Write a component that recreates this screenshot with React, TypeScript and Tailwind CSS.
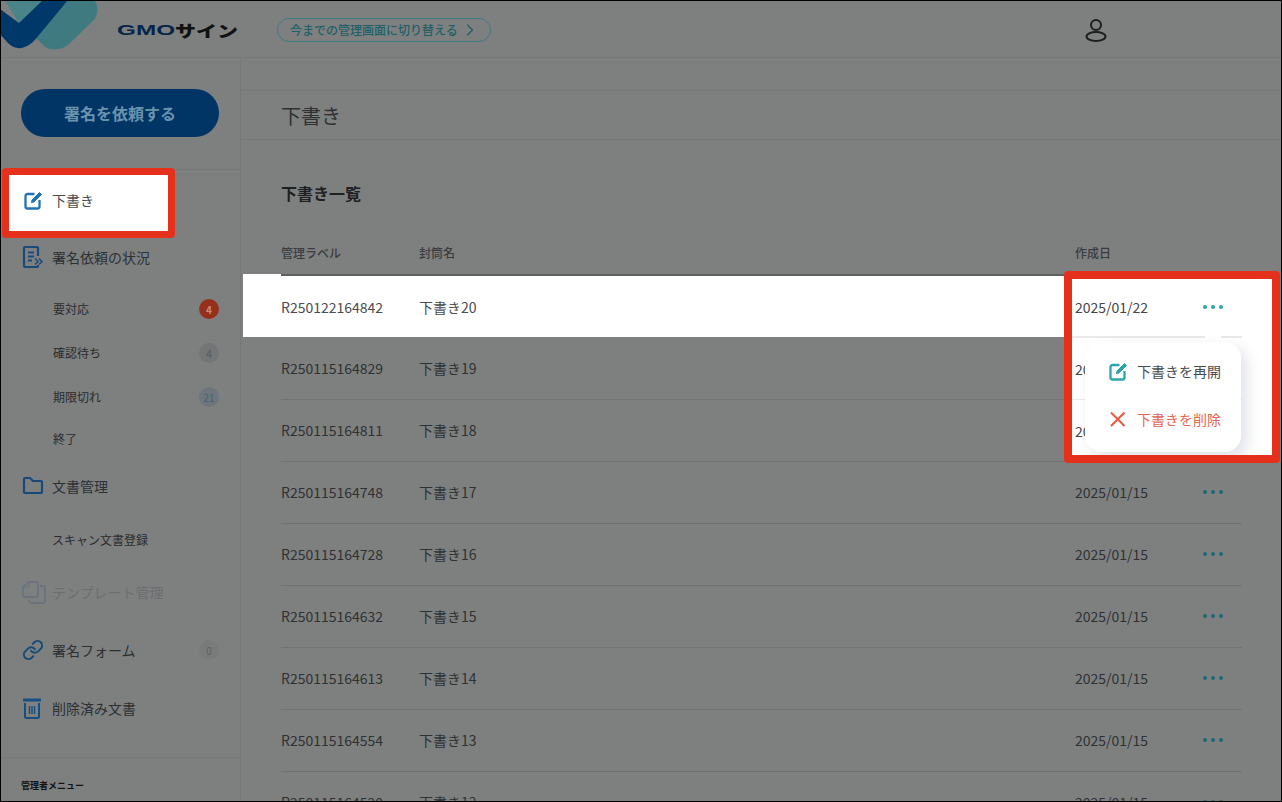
import { ChevronRight, Link } from 'lucide-react';
import type { ReactNode } from 'react';

const FONT = 'font-["Noto_Sans_CJK_JP","Noto_Sans",sans-serif]';

const DRAFTS = [
  ['R250122164842', '下書き20', '2025/01/22'],
  ['R250115164829', '下書き19', '2025/01/15'],
  ['R250115164811', '下書き18', '2025/01/15'],
  ['R250115164748', '下書き17', '2025/01/15'],
  ['R250115164728', '下書き16', '2025/01/15'],
  ['R250115164632', '下書き15', '2025/01/15'],
  ['R250115164613', '下書き14', '2025/01/15'],
  ['R250115164554', '下書き13', '2025/01/15'],
  ['R250115164520', '下書き12', '2025/01/15'],
];

function Dots({ color }: { color: string }) {
  return (
    <div className="flex w-5 justify-between">
      <span className={`size-1 rounded-full ${color}`} />
      <span className={`size-1 rounded-full ${color}`} />
      <span className={`size-1 rounded-full ${color}`} />
    </div>
  );
}

function Logo() {
  return (
    <svg width="100" height="50" viewBox="0 0 100 50" className="shrink-0">
      <path d="M4 0 H44 L18 22 Z" fill="#4a8388" />
      <path d="M60 0 H94 Q99 8 94 18 L67 44 Q55 52 44 46 L34 36 Z" fill="#3f7a80" />
      <path d="M-1 8 L18 22 L42 -1 H67 L33 40 Q18 54 6 41 L-1 33 Z" fill="#00386a" />
    </svg>
  );
}

function PenIcon({ color }: { color: string }) {
  return (
    <svg width="19" height="19" viewBox="0 0 19 19" fill="none" stroke={color} strokeWidth="2.3" className="shrink-0">
      <path d="M10.5 3 H3.5 a2 2 0 0 0 -2 2 V15.5 a2 2 0 0 0 2 2 H13.5 a2 2 0 0 0 2 -2 V9" />
      <path d="M7.5 11.5 L8 9 L15.5 1.5 L17.5 3.5 L10 11 Z" fill={color} stroke={color} strokeWidth="1" />
    </svg>
  );
}

function CrossIcon() {
  return (
    <svg width="19" height="19" viewBox="0 0 19 19" fill="none" stroke="#e4583f" strokeWidth="2" className="shrink-0">
      <path d="M2 2.5 L15.5 16 M15.5 2.5 L2 16" />
    </svg>
  );
}

function DocIcon() {
  return (
    <svg width="22" height="24" viewBox="0 0 22 24" fill="none" stroke="#1b4b78" strokeWidth="2.2">
      <path d="M16 20 V21 a1 1 0 0 1 -1 1 H3 a1 1 0 0 1 -1 -1 V3 a1 1 0 0 1 1 -1 H15 a1 1 0 0 1 1 1 V11" />
      <path d="M6 7.5 H12 M6 11.5 H12 M6 15.5 H10" />
      <path d="M13 13.5 L16 16.5 L13 19.5 M17 13.5 L20 16.5 L17 19.5" strokeWidth="1.7" />
    </svg>
  );
}

function FolderIcon() {
  return (
    <svg width="22" height="20" viewBox="0 0 22 20" fill="none" stroke="#174a78" strokeWidth="2.2">
      <path d="M2 3 a1 1 0 0 1 1 -1 H8 L11 5 H19 a1 1 0 0 1 1 1 V16 a1 1 0 0 1 -1 1 H3 a1 1 0 0 1 -1 -1 Z" />
    </svg>
  );
}

function TemplateIcon() {
  return (
    <svg width="24" height="24" viewBox="0 0 24 24" fill="none" stroke="#6a737c" strokeWidth="1.8">
      <path d="M7 2 H14 a2 2 0 0 1 2 2 V15 a2 2 0 0 1 -2 2 H3 a2 2 0 0 1 -2 -2 V7 Z" />
      <path d="M7 2 V7 H1" strokeWidth="1.2" />
      <path d="M18 6 h3 a2 2 0 0 1 2 2 V21 a2 2 0 0 1 -2 2 H9 a2 2 0 0 1 -2 -2 V20" />
    </svg>
  );
}

function TrashIcon() {
  return (
    <svg width="20" height="22" viewBox="0 0 20 22" fill="none" stroke="#164f80" strokeWidth="2">
      <path d="M1 3 H19" strokeWidth="3" />
      <path d="M3 6 V19.5 a1.5 1.5 0 0 0 1.5 1.5 H15.5 a1.5 1.5 0 0 0 1.5 -1.5 V6" />
      <path d="M7.5 9 V17 M10 9 V17 M12.5 9 V17" strokeWidth="1.4" />
    </svg>
  );
}

function UserIcon() {
  return (
    <svg width="22" height="24" viewBox="0 0 22 24" fill="none" stroke="#1c1f20" strokeWidth="2">
      <circle cx="11" cy="7" r="5" />
      <ellipse cx="11" cy="18.5" rx="9.5" ry="4.5" />
    </svg>
  );
}

function NavItem({
  icon,
  label,
  badge,
  muted,
}: {
  icon: ReactNode;
  label: string;
  badge?: ReactNode;
  muted?: boolean;
}) {
  return (
    <div className="flex h-[58px] items-center pr-[21px] pb-[2px] pl-[21px]">
      <div className="flex w-[30px] shrink-0 items-center">{icon}</div>
      <span className={`flex-1 text-sm ${muted ? 'text-[#6b6e70]' : 'text-[#2c3033]'}`}>{label}</span>
      {badge}
    </div>
  );
}

function SubItem({
  label,
  height,
  badge,
  indent = 'pl-[52px]',
}: {
  label: string;
  height: string;
  badge?: ReactNode;
  indent?: string;
}) {
  return (
    <div className={`flex items-center pr-[21px] ${indent} ${height}`}>
      <span className="flex-1 text-xs text-[#2a2c2d]">{label}</span>
      {badge}
    </div>
  );
}

function Badge({ value, className }: { value: string; className: string }) {
  return (
    <span className={`flex size-5 items-center justify-center rounded-full text-[10px] ${className}`}>
      {value}
    </span>
  );
}

function Sidebar() {
  return (
    <aside className="flex w-[240px] shrink-0 flex-col border-r border-[#777979]">
      <div className="h-[112px] border-b border-[#777979] px-5 pt-[31px]">
        <div className="flex h-12 w-[198px] items-center justify-center rounded-full bg-[#003565] text-base font-bold text-[#6a93ae]">
          署名を依頼する
        </div>
      </div>

      <div className="relative mt-px flex h-[58px] items-center pl-[23px]">
        <div className="absolute -top-[3px] left-[1px] h-[70px] w-[173px] rounded-sm border-[7px] border-[#e5301c] bg-white" />
        <div className="relative flex items-center gap-[9px]">
          <PenIcon color="#2272b5" />
          <span className="text-sm text-[#4a4c4e]">下書き</span>
        </div>
      </div>

      <NavItem icon={<DocIcon />} label="署名依頼の状況" />
      <SubItem label="要対応" height="h-11" badge={<Badge value="4" className="bg-[#96301c] font-bold text-[#c98c7e]" />} />
      <SubItem label="確認待ち" height="h-11" badge={<Badge value="4" className="bg-[#737576] text-[#54585b]" />} />
      <SubItem label="期限切れ" height="h-11" badge={<Badge value="21" className="bg-[#6e757b] text-[#46617a]" />} />
      <SubItem label="終了" height="h-[39px] pt-px" />
      <NavItem icon={<FolderIcon />} label="文書管理" />
      <SubItem label="スキャン文書登録" height="h-12" indent="pl-[51px]" />
      <NavItem icon={<TemplateIcon />} label="テンプレート管理" muted />
      <NavItem
        icon={<Link size={22} strokeWidth={2.2} className="text-[#174a78]" />}
        label="署名フォーム"
        badge={<Badge value="0" className="bg-[#797a7a] text-[#5e6163]" />}
      />
      <NavItem icon={<TrashIcon />} label="削除済み文書" />

      <div className="mt-[19px] flex h-11 items-center border-t border-[#777979] pt-3 pl-5 text-[9px] font-bold text-[#111]">
        管理者メニュー
      </div>
    </aside>
  );
}

function Spotlight() {
  return (
    <div className="absolute top-[-5px] left-[821px] z-10 h-[192px] w-[216px] overflow-hidden rounded-sm border-[8px] border-[#e5301c] bg-white">
      <div className="mr-[30px] flex h-[59px] items-center justify-between border-b-2 border-[#e7e9eb] pb-px pl-[3px] text-sm text-[#44474a]">
        2025/01/22
        <span className="mr-[19px]">
          <Dots color="bg-[#2aa5ab]" />
        </span>
      </div>
      <div className="mr-[30px] flex h-[62px] items-center border-b border-[#e7e9eb] pl-[3px] text-sm text-[#44474a]">2025/01/15</div>
      <div className="mr-[30px] flex h-[62px] items-center pl-[3px] text-sm text-[#44474a]">2025/01/15</div>
      <div className="absolute top-[56px] left-[133px] h-3 w-4 bg-white" />
      <div className="absolute top-[63px] left-[13px] w-[156px] rounded-2xl bg-white pt-[5px] pr-0 pb-[9px] pl-6 shadow-[6px_6px_14px_rgba(110,125,150,0.22)]">
        <div className="flex h-12 items-center gap-[9px] text-sm text-[#4a4c4e]">
          <PenIcon color="#2aa5ab" />
          下書きを再開
        </div>
        <div className="flex h-12 items-center gap-[9px] text-sm text-[#e4674f]">
          <CrossIcon />
          下書きを削除
        </div>
      </div>
    </div>
  );
}

function DraftRow({ row, active }: { row: string[]; active: boolean }) {
  return (
    <div
      className={`relative flex items-center text-sm ${
        active
          ? 'mb-px ml-[2px] h-[61px] bg-white pl-[38px] text-[#4a4c4e]'
          : 'ml-10 h-[62px] border-b border-[#707272] pb-[2px] text-[#2f3133]'
      }`}
    >
      {active && (
        <>
          <div className="absolute -top-[2px] left-0 h-[2px] w-[38px] bg-white" />
          <Spotlight />
        </>
      )}
      <span className="w-[138px]">{row[0]}</span>
      <span className="flex-1">{row[1]}</span>
      {!active && (
        <>
          <span className="w-[128px]">{row[2]}</span>
          <div className="w-[39px]">
            <Dots color="bg-[#1a6a74]" />
          </div>
        </>
      )}
    </div>
  );
}

export default function App() {
  return (
    <div className={`h-[802px] w-[1282px] overflow-hidden border border-black bg-[#7e8080] ${FONT}`}>
      <header className="flex h-[57px] items-start border-b border-[#777979]">
        <Logo />
        <div className="mt-[21px] ml-[16px] flex h-4 w-[160px] items-center font-bold whitespace-nowrap text-[#05254a]">
          <span className="w-[58px] origin-left scale-x-[1.62] font-['Liberation_Sans'] text-[15px]">GMO</span>
          <span className="origin-left scale-x-[1.31] text-[16px] font-black text-[#111]">サイン</span>
        </div>
        <div className="mt-[17px] flex h-6 w-[214px] items-center gap-[2px] rounded-full border border-[#3f7a80] pl-[12px] text-xs font-medium text-[#1e5f68]">
          今までの管理画面に切り替える
          <ChevronRight size={20} strokeWidth={1.5} />
        </div>
        <div className="mt-[17px] ml-[594px]">
          <UserIcon />
        </div>
      </header>

      <div className="flex">
        <Sidebar />
        <main className="flex-1">
          <div className="h-[33px] border-b border-[#777979]" />
          <div className="flex h-[49px] items-center border-b border-[#777979] pt-px pl-10 text-xl text-[#2f3133]">
            下書き
          </div>
          <h2 className="mt-[38px] ml-10 text-base leading-[30px] font-bold text-[#1e2022]">下書き一覧</h2>
          <div className="mt-[37px] mr-[39px] ml-10 flex h-[31px] items-start border-b-2 border-[#5f6162] text-xs font-medium text-[#3a3c3e]">
            <span className="w-[138px]">管理ラベル</span>
            <span className="flex-1">封筒名</span>
            <span className="w-[167px]">作成日</span>
          </div>
          <div className="mr-[39px]">
            {DRAFTS.map((row, i) => (
              <DraftRow key={row[0]} row={row} active={i === 0} />
            ))}
          </div>
        </main>
      </div>
    </div>
  );
}
